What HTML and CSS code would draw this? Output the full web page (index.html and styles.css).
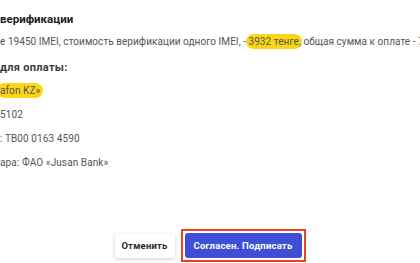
FILE: index.html
```html
<!DOCTYPE html>
<html lang="ru">
<head>
    <meta charset="UTF-8">
    <meta name="viewport" content="width=device-width, initial-scale=1.0">
    <title>Подтверждение верификации</title>
    <link rel="stylesheet" href="styles.css">
</head>
<body>
    <div class="dialog">
        <h3 class="title">верификации</h3>
        <p class="summary">е 19450 IMEI, стоимость верификации одного IMEI, - <span class="mark">3932 тенге</span>, общая сумма к оплате - 76 477 400 тенге</p>

        <h4 class="label">для оплаты:</h4>
        <div class="details">
            <div class="row"><span class="mark">afon KZ»</span></div>
            <div class="row">5102</div>
            <div class="row">: TB00 0163 4590</div>
            <div class="row">ара: ФАО «Jusan Bank»</div>
        </div>

        <div class="actions">
            <button class="btn btn-cancel" type="button">Отменить</button>
            <div class="focus-box">
                <button class="btn btn-sign" type="button">Согласен. Подписать</button>
            </div>
        </div>
    </div>
</body>
</html>
```

FILE: styles.css
```css
body {
    margin: 0;
    padding: 0;
    font-family: Roboto, "Liberation Sans", Arial, sans-serif;
    background-color: #fff;
    overflow: hidden;
}

.dialog {
    width: 420px;
    height: 263px;
    overflow: hidden;
    white-space: nowrap;
    display: flex;
    flex-direction: column;
}

.title {
    margin: 9px 0 0 0;
    font-size: 11.5px;
    line-height: 20px;
    font-weight: 700;
    color: #222;
}

.summary {
    margin: 5px 0 0 0;
    font-size: 10px;
    line-height: 16px;
    color: #555;
    letter-spacing: 0.05px;
}

.label {
    margin: 9px 0 0 0;
    font-size: 11px;
    line-height: 18px;
    font-weight: 700;
    color: #3a3a3a;
    letter-spacing: 0.3px;
}

.details {
    margin-top: 2px;
    font-size: 10px;
    color: #555;
    letter-spacing: 0.1px;
}

.row {
    line-height: 24px;
}

.mark {
    background-color: #fbd616;
    border-radius: 8px;
    padding: 2px 3px;
    margin: 0 -3px;
}

.actions {
    margin-top: 54px;
    display: flex;
    justify-content: center;
    align-items: center;
    gap: 6px;
}

.btn {
    font-family: Roboto, "Liberation Sans", Arial, sans-serif;
    font-size: 9.5px;
    font-weight: 700;
    letter-spacing: 0.2px;
    border: none;
    border-radius: 3px;
    cursor: pointer;
}

.btn-cancel {
    width: 60px;
    height: 24px;
    background-color: #fff;
    color: #2a2a2a;
    box-shadow: 0 1px 4px rgba(0, 0, 0, 0.2);
}

.focus-box {
    border: 2px solid #e2451f;
    padding: 2px;
}

.btn-sign {
    display: block;
    width: 117px;
    height: 25px;
    background-color: #3e4fd6;
    color: #fff;
}
```
